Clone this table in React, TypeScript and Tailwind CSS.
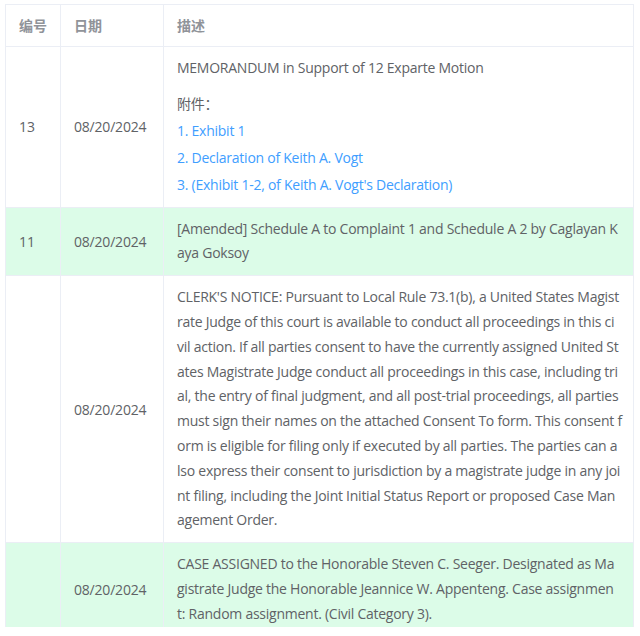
const rows = [
  {
    no: '13',
    date: '08/20/2024',
    green: false,
    lines: ['MEMORANDUM in Support of 12 Exparte Motion'],
    links: ['1. Exhibit 1', '2. Declaration of Keith A. Vogt', "3. (Exhibit 1-2, of Keith A. Vogt's Declaration)"],
  },
  {
    no: '11',
    date: '08/20/2024',
    green: true,
    lines: ['[Amended] Schedule A to Complaint 1 and Schedule A 2 by Caglayan K', 'aya Goksoy'],
  },
  {
    no: '',
    date: '08/20/2024',
    green: false,
    lines: [
      "CLERK'S NOTICE: Pursuant to Local Rule 73.1(b), a United States Magist",
      'rate Judge of this court is available to conduct all proceedings in this ci',
      'vil action. If all parties consent to have the currently assigned United St',
      'ates Magistrate Judge conduct all proceedings in this case, including tri',
      'al, the entry of final judgment, and all post-trial proceedings, all parties',
      'must sign their names on the attached Consent To form. This consent f',
      'orm is eligible for filing only if executed by all parties. The parties can a',
      'lso express their consent to jurisdiction by a magistrate judge in any joi',
      'nt filing, including the Joint Initial Status Report or proposed Case Man',
      'agement Order.',
    ],
  },
  {
    no: '',
    date: '08/20/2024',
    green: true,
    lines: [
      'CASE ASSIGNED to the Honorable Steven C. Seeger. Designated as Ma',
      'gistrate Judge the Honorable Jeannice W. Appenteng. Case assignmen',
      't: Random assignment. (Civil Category 3).',
    ],
  },
];

export default function App() {
  return (
    <div className="h-[636px] w-[640px] overflow-hidden bg-white pl-[5px] pt-[4px] font-['Open_Sans','Noto_Sans_CJK_SC',sans-serif] text-[14px] text-[#606266]">
      <div className="h-[623px] w-[629px] overflow-hidden">
        <div className="grid grid-cols-[55px_103px_1fr] border-l border-t border-[#ebeef5]">
          <div className="flex h-[42px] items-center border-b border-r border-[#ebeef5] px-[13px] font-bold text-[#909399]">编号</div>
          <div className="flex h-[42px] items-center border-b border-r border-[#ebeef5] px-[13px] font-bold text-[#909399]">日期</div>
          <div className="flex h-[42px] items-center border-b border-r border-[#ebeef5] px-[13px] font-bold text-[#909399]">描述</div>
          {rows.map((r, i) => {
            const bg = r.green ? 'bg-[#dcfce8]' : 'bg-white';
            return [
              <div key={i + 'a'} className={`flex items-center border-b border-r border-[#ebeef5] px-[13px] ${bg}`}>{r.no}</div>,
              <div key={i + 'b'} className={`flex items-center border-b border-r border-[#ebeef5] px-[13px] tracking-[-0.2px] ${bg}`}>{r.date}</div>,
              <div key={i + 'c'} className={`border-b border-r border-[#ebeef5] py-[9px] pl-[13px] pr-[8px] leading-[24.8px] tracking-[-0.25px] ${bg}`}>
                {r.lines.map((l) => (
                  <div key={l} className="whitespace-nowrap">{l}</div>
                ))}
                {r.links && (
                  <>
                    <p className="mt-[11px]">附件：</p>
                    {r.links.map((l) => (
                      <a key={l} className="block leading-[27px] text-[#409eff]">{l}</a>
                    ))}
                  </>
                )}
              </div>,
            ];
          })}
        </div>
      </div>
    </div>
  );
}
